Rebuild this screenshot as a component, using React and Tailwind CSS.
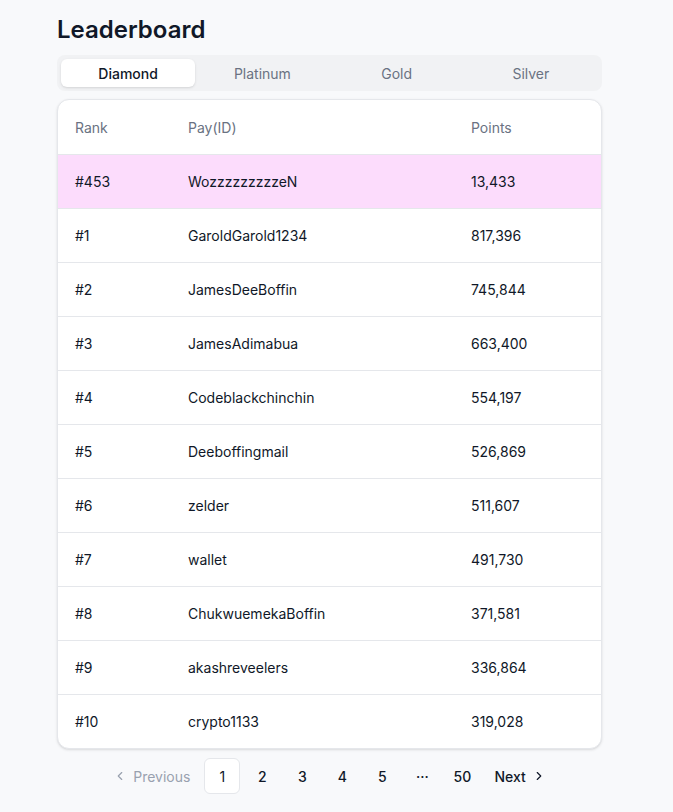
import { ChevronLeft, ChevronRight } from "lucide-react";

const rows = [
  ["#1", "GaroldGarold1234", "817,396"],
  ["#2", "JamesDeeBoffin", "745,844"],
  ["#3", "JamesAdimabua", "663,400"],
  ["#4", "Codeblackchinchin", "554,197"],
  ["#5", "Deeboffingmail", "526,869"],
  ["#6", "zelder", "511,607"],
  ["#7", "wallet", "491,730"],
  ["#8", "ChukwuemekaBoffin", "371,581"],
  ["#9", "akashreveelers", "336,864"],
  ["#10", "crypto1133", "319,028"],
];

const Row = ({ r, className = "" }) => (
  <div className={`flex items-center h-[54px] border-t border-gray-200 text-[14px] text-gray-900 ${className}`}>
    <div className="w-[130px] pl-[17px]">{r[0]}</div>
    <div className="w-[283px]">{r[1]}</div>
    <div>{r[2]}</div>
  </div>
);

const App = () => {
  const tabs = ["Diamond", "Platinum", "Gold", "Silver"];
  return (
    <div className="min-h-[812px] bg-[#f8f9fb] pl-[57px] pt-[14px]" style={{ fontFamily: "Inter, sans-serif" }}>
      <div className="w-[545px]">
        <h1 className="text-[24px] font-semibold text-gray-900 leading-[32px]">Leaderboard</h1>
        <div className="mt-[9px] flex h-[36px] rounded-lg bg-[#f1f2f4] p-[4px]">
          {tabs.map((t, i) => (
            <div
              key={t}
              className={`flex-1 flex items-center justify-center rounded-md text-[14px] ${i === 0 ? "bg-white text-gray-900 font-medium shadow-sm" : "text-gray-500"}`}
            >
              {t}
            </div>
          ))}
        </div>
        <div className="mt-[8px] rounded-xl border border-gray-200 bg-white shadow-sm overflow-hidden">
          <div className="flex items-center h-[54px] text-[14px] text-gray-500">
            <div className="w-[130px] pl-[17px]">Rank</div>
            <div className="w-[283px]">Pay(ID)</div>
            <div>Points</div>
          </div>
          <Row r={["#453", "WozzzzzzzzzeN", "13,433"]} className="bg-[#fcdcfc]" />
          {rows.map((r) => (
            <Row key={r[0]} r={r} />
          ))}
        </div>
        <div className="mt-[9px] flex items-center justify-center gap-[4px] text-[14px] text-gray-900">
          <div className="flex items-center gap-[6px] px-[10px] h-[36px] text-gray-400">
            <ChevronLeft size={14} /> Previous
          </div>
          <div className="w-[36px] h-[36px] flex items-center justify-center rounded-md border border-gray-200 bg-white">1</div>
          {["2", "3", "4", "5", "···", "50"].map((p) => (
            <div key={p} className="w-[36px] h-[36px] flex items-center justify-center font-medium">{p}</div>
          ))}
          <div className="flex items-center gap-[6px] px-[10px] h-[36px] font-medium">
            Next <ChevronRight size={14} />
          </div>
        </div>
      </div>
    </div>
  );
};

export default App;
